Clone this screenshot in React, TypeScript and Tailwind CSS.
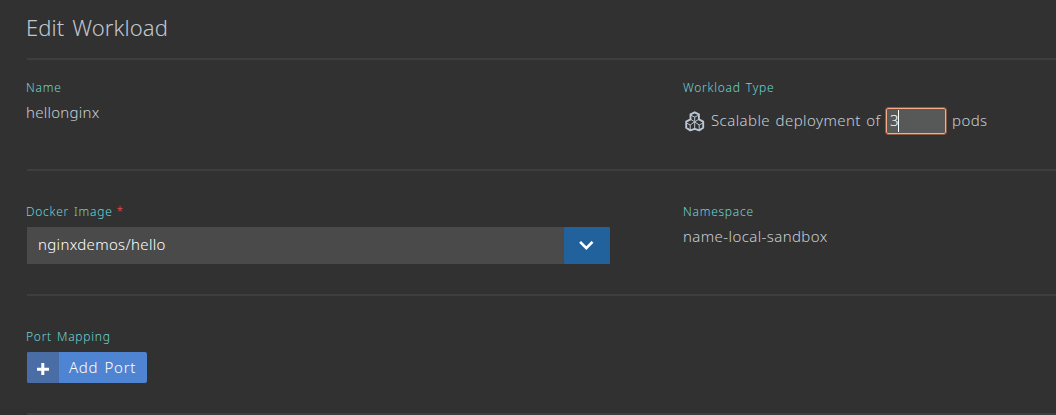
import type { ReactNode } from 'react';

function Label({ children }: { children: ReactNode }) {
  return (
    <div className="-ml-px text-[12px] leading-4 tracking-[0.74px] [word-spacing:1.2px] whitespace-nowrap text-[#6fd6d8]">
      {children}
    </div>
  );
}

function PodsIcon() {
  return (
    <svg width="21" height="21" viewBox="0 0 21 21" fill="none" stroke="#bcc6d0" strokeLinejoin="round" className="shrink-0">
      <path strokeWidth="1.9" d="M10.7 1.3 14.9 3.4V8.3L19.2 10.7V16.7L15.2 19.4 10.7 17.8 6.2 19.4 2.2 16.7V10.7L6.5 8.3V3.4Z" />
      <path strokeWidth="1" d="m6.6 8.3 4.1 2.5 4.1-2.5M10.7 10.8v7M7 4.3l3.7 1.8 3.7-1.8M10.7 6.1v4.7M2.5 12l3.7 2 4.5-3.2 4.5 3.2 3.7-2M6.2 14v5M15.2 14v5" />
    </svg>
  );
}

export default function App() {
  return (
    <main className="h-[415px] w-[1056px] overflow-hidden bg-[#313131] pl-[27px] font-['Noto_Sans',sans-serif] text-[15px] font-light text-[#c8ced6]">
      <header className="flex h-[60px] border-b-2 border-[#3e3e3e] pt-[12px]">
        <h1 className="-ml-px text-[22px] leading-[30px] font-light tracking-[0.1px] [word-spacing:2px] whitespace-nowrap text-[#c1c7cf]">Edit Workload</h1>
      </header>
      <section className="grid h-[111px] grid-cols-[657px_1fr] border-b-2 border-[#3e3e3e] pt-5">
        <div>
          <Label>Name</Label>
          <p className="mt-[6px] -ml-px leading-5 tracking-[0.25px]">hellonginx</p>
        </div>
        <div>
          <Label>Workload Type</Label>
          <div className="mt-[11px] flex h-7 items-center whitespace-nowrap">
            <PodsIcon />
            <span className="-mt-0.5 ml-[6px] w-[175px] tracking-[0.42px] [word-spacing:1.2px]">Scalable deployment of</span>
            <div className="flex h-[26px] w-[60px] items-center rounded-[2px] border border-[#f8ad86] bg-[#575958] pl-[3px] text-white outline-1 outline-[#8f583e]">
              <span className="-mt-0.5">3</span>
              <span className="-ml-px h-[22px] w-px bg-white" />
            </div>
            <span className="-mt-0.5 ml-[6px] tracking-[0.4px]">pods</span>
          </div>
        </div>
      </section>
      <section className="grid h-[125px] grid-cols-[657px_1fr] border-b-2 border-[#3e3e3e] pt-[33px]">
        <div>
          <Label>Docker Image <span className="-ml-px text-[#ff4b4b]">*</span></Label>
          <div className="mt-[7px] flex h-[37px] w-[583px]">
            <div className="flex flex-1 items-center bg-[#4a4a4a] pl-[11px] text-white">
              <span className="-mt-0.5 tracking-[0.33px]">nginxdemos/hello</span>
            </div>
            <button className="flex w-[46px] items-center justify-center rounded-[1px] bg-[#22629c]">
              <svg width="16" height="12" viewBox="0 0 16 12" fill="none" stroke="white" strokeWidth="2.7"><path d="m1.1 1.9 6.2 6.2 6.2-6.2" /></svg>
            </button>
          </div>
        </div>
        <div>
          <Label>Namespace</Label>
          <p className="mt-[6px] -ml-px leading-5 tracking-[0.4px]">name-local-sandbox</p>
        </div>
      </section>
      <section className="h-[119px] border-b-2 border-[#3e3e3e] pt-[33px]">
        <Label>Port Mapping</Label>
        <button className="mt-[7px] flex h-[31px] w-[120px] overflow-hidden rounded-[2px] bg-[#4f84d2] text-white">
          <span className="flex h-full w-8 items-center justify-center bg-[#496da4]">
            <svg width="14" height="14" viewBox="0 0 14 14" className="mt-[3px]"><path d="M5.3 1h3v4.7H13v3H8.3V13h-3V8.7H1v-3h4.3z" fill="white" /></svg>
          </span>
          <span className="pl-[10px] leading-[31px] tracking-[0.75px] [word-spacing:1.5px] whitespace-nowrap">Add Port</span>
        </button>
      </section>
    </main>
  );
}
